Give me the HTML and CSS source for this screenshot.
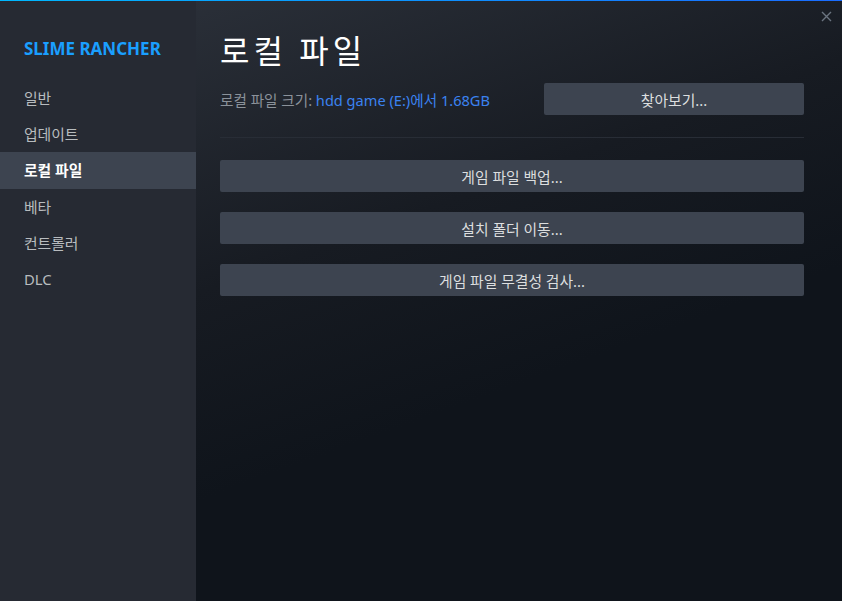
FILE: index.html
```html
<!DOCTYPE html>
<html lang="ko">
<head>
    <meta charset="UTF-8">
    <title>Slime Rancher - 속성</title>
    <link rel="stylesheet" href="styles.css">
</head>
<body>
    <div class="window">
        <div class="topline"></div>
        <div class="frame">
            <div class="sidebar">
                <div class="gameTitle">SLIME RANCHER</div>
                <div class="navItem">일반</div>
                <div class="navItem">업데이트</div>
                <div class="navItem selected">로컬 파일</div>
                <div class="navItem">베타</div>
                <div class="navItem">컨트롤러</div>
                <div class="navItem">DLC</div>
            </div>
            <div class="main">
                <div class="closeBtn">
                    <svg width="11" height="11" viewBox="0 0 11 11">
                        <path d="M1 1 L10 10 M10 1 L1 10" stroke="#6b7480" stroke-width="1.4" fill="none"/>
                    </svg>
                </div>
                <h1 class="heading">로컬 파일</h1>
                <div class="infoRow">
                    <div class="info">로컬 파일 크기: <span class="link">hdd game (E:)에서 1.68GB</span></div>
                    <button class="btn browse">찾아보기...</button>
                </div>
                <div class="separator"></div>
                <div class="actions">
                    <button class="btn">게임 파일 백업...</button>
                    <button class="btn">설치 폴더 이동...</button>
                    <button class="btn">게임 파일 무결성 검사...</button>
                </div>
            </div>
        </div>
    </div>
</body>
</html>
```
FILE: styles.css
```css
html, body { margin: 0; padding: 0; height: 100%; }
body {
    font-family: "Noto Sans", "Noto Sans CJK KR", sans-serif;
    background: #0f141b;
    color: #dcdedf;
}
.window { display: flex; flex-direction: column; height: 601px; width: 842px; }
.topline { height: 1px; background: linear-gradient(to right, #00b8ff, #1a6cff); flex-shrink: 0; }
.frame { display: flex; flex: 1; }

.sidebar { width: 196px; background: #262a33; flex-shrink: 0; padding-top: 36px; }
.gameTitle {
    color: #1a9fff; font-weight: bold; font-size: 17px;
    padding-left: 24px; height: 24px; line-height: 24px; margin-bottom: 19px;
}
.navItem {
    color: #b8bcbf; font-size: 14.8px; padding-left: 24px;
    height: 36.2px; line-height: 36px;
}
.navItem.selected { background: #3d4450; color: #ffffff; font-weight: bold; }

.main {
    flex: 1; position: relative;
    padding: 0 38px 0 24px;
    background: linear-gradient(160deg, #2a2f38 0%, #171b22 35%, #0f141b 60%, #0f141b 100%);
}
.closeBtn { position: absolute; top: 4px; right: 10px; }
.heading {
    font-weight: normal; font-size: 32px; color: #ffffff;
    margin: 28px 0 0 0; height: 44px; line-height: 44px; letter-spacing: 4px;
}
.infoRow { display: flex; align-items: center; justify-content: space-between; margin-top: 10px; }
.info { color: #8b929a; font-size: 14.6px; }
.link { color: #3b82f0; }
.btn {
    border: 0; border-radius: 2px; background: #3d4450; color: #dcdedf;
    font-family: "Noto Sans", "Noto Sans CJK KR", sans-serif; font-size: 14.8px;
    height: 32px; width: 100%; padding: 0;
}
.browse { width: 260px; }
.separator { height: 1px; background: #282d36; margin: 22px 0 22px 0; }
.actions { display: flex; flex-direction: column; gap: 20px; }
```
